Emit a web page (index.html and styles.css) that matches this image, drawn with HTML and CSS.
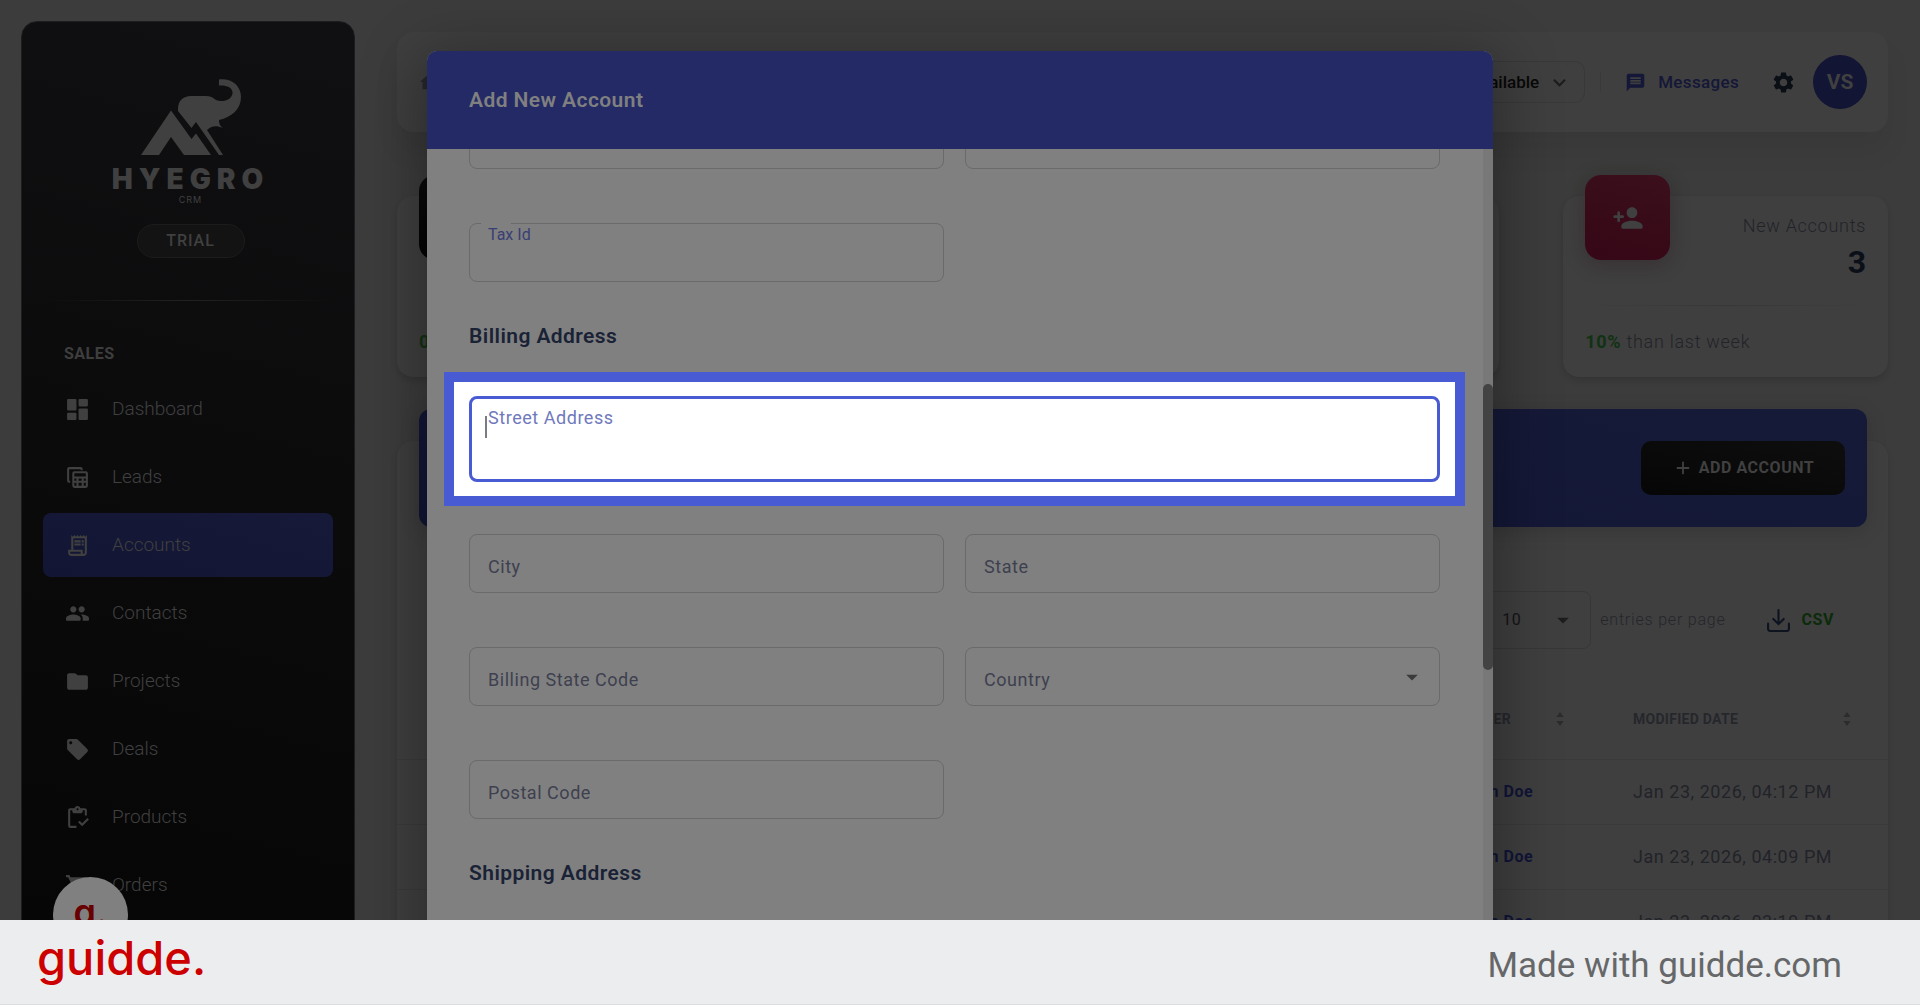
FILE: index.html
```html
<!DOCTYPE html>
<html lang="en">
<head>
    <meta charset="UTF-8">
    <meta name="viewport" content="width=device-width, initial-scale=1.0">
    <title>Hyegro CRM - Accounts</title>
    <link rel="stylesheet" href="styles.css">
</head>
<body>
    <div class="stage">
        <aside class="sidebar">
            <div class="brand">
                <svg class="brand-mark" viewBox="0 0 100 76" aria-hidden="true">
                    <path d="M0 76 30 31.500 50.500 60 55 54.500 70 76H43L30 58 18 76Z"/>
                    <path d="M37 30C37 22 42 17 50 17H65C73 17 73 22 80 22C87 22 92 18 91.500 13C91 8 85 6 78 6.500V.5C91-1 100 7 100 18C100 30 91 38 78 41C78 45 79 47 82 49C75 46 70 47 66 51L82 76H78L55 43 50.500 49 37 32Z"/>
                </svg>
                <span class="brand-name">HYEGRO</span>
                <span class="brand-sub">CRM</span>
                <span class="plan">TRIAL</span>
            </div>
            <hr class="fade-line">
            <h2 class="nav-title">SALES</h2>
            <nav class="nav">
                <a href="#" class="nav-item">
                    <svg viewBox="0 0 24 24"><path d="M4 2h6a1 1 0 0 1 1 1v9a1 1 0 0 1-1 1H3a1 1 0 0 1-1-1V3a1 1 0 0 1 1-1zM14 2h7a1 1 0 0 1 1 1v5a1 1 0 0 1-1 1h-7a1 1 0 0 1-1-1V3a1 1 0 0 1 1-1zM14 11h7a1 1 0 0 1 1 1v9a1 1 0 0 1-1 1h-7a1 1 0 0 1-1-1v-9a1 1 0 0 1 1-1zM3 15h7a1 1 0 0 1 1 1v5a1 1 0 0 1-1 1H3a1 1 0 0 1-1-1v-5a1 1 0 0 1 1-1z"/></svg>
                    Dashboard
                </a>
                <a href="#" class="nav-item">
                    <svg viewBox="0 0 24 24"><path fill-rule="evenodd" d="M5 17H4a2 2 0 0 1-2-2V4a2 2 0 0 1 2-2h11a2 2 0 0 1 2 2v1h-2V4H4v11h1zM9 6h11a2 2 0 0 1 2 2v12a2 2 0 0 1-2 2H9a2 2 0 0 1-2-2V8a2 2 0 0 1 2-2zm0 2v3h11V8zm0 5v2h2v-2zm4 0v2h3v-2zm5 0v2h2v-2zm-9 4v3h2v-3zm4 0v3h3v-3zm5 0v3h2v-3z"/></svg>
                    Leads
                </a>
                <a href="#" class="nav-item active">
                    <svg viewBox="0 0 24 24"><path d="M19.500 3.500 18 2l-1.500 1.500L15 2l-1.500 1.500L12 2l-1.500 1.500L9 2 7.500 3.500 6 2v14H3v3c0 1.660 1.340 3 3 3h12c1.660 0 3-1.340 3-3V2zM15 20H6c-.55 0-1-.45-1-1v-1h10zm4-1c0 .55-.45 1-1 1s-1-.45-1-1v-3H8V5h11zM9 7h6v2H9zm7 0h2v2h-2zm-7 3h6v2H9zm7 0h2v2h-2z"/></svg>
                    Accounts
                </a>
                <a href="#" class="nav-item">
                    <svg viewBox="0 0 24 24"><path d="M16 11c1.660 0 2.990-1.340 2.990-3S17.660 5 16 5s-3 1.340-3 3 1.340 3 3 3m-8 0c1.660 0 2.990-1.340 2.990-3S9.660 5 8 5 5 6.340 5 8s1.340 3 3 3m0 2c-2.330 0-7 1.170-7 3.500V18c0 .55.45 1 1 1h12c.55 0 1-.45 1-1v-1.500C15 14.170 10.330 13 8 13m8 0c-.29 0-.62.02-.97.05 1.160.84 1.970 1.970 1.970 3.450V19h5c.55 0 1-.45 1-1v-1.500c0-2.330-4.670-3.500-7-3.500"/></svg>
                    Contacts
                </a>
                <a href="#" class="nav-item">
                    <svg viewBox="0 0 24 24"><path d="M10.590 4.590C10.210 4.210 9.700 4 9.170 4H4c-1.100 0-1.990.9-1.990 2L2 18c0 1.100.9 2 2 2h16c1.100 0 2-.9 2-2V8c0-1.100-.9-2-2-2h-8z"/></svg>
                    Projects
                </a>
                <a href="#" class="nav-item">
                    <svg viewBox="0 0 24 24"><path d="m21.410 11.580-9-9C12.050 2.220 11.550 2 11 2H4c-1.100 0-2 .9-2 2v7c0 .55.22 1.050.59 1.420l9 9c.36.36.86.58 1.410.58s1.050-.22 1.410-.59l7-7c.37-.36.59-.86.59-1.410s-.23-1.060-.59-1.420M5.500 7C4.670 7 4 6.330 4 5.500S4.670 4 5.500 4 7 4.670 7 5.500 6.330 7 5.500 7"/></svg>
                    Deals
                </a>
                <a href="#" class="nav-item">
                    <svg viewBox="0 0 24 24"><path d="M5 5h2v1c0 1.100.9 2 2 2h6c1.100 0 2-.9 2-2V5h2v5h2V5c0-1.100-.9-2-2-2h-4.180C14.400 1.840 13.300 1 12 1s-2.400.84-2.820 2H5c-1.100 0-2 .9-2 2v15c0 1.100.9 2 2 2h6v-2H5zm7-2c.55 0 1 .45 1 1s-.45 1-1 1-1-.45-1-1 .45-1 1-1m9.500 9.500-5.010 5.010-2.490-2.500-1.500 1.500 3.990 4L23 14z"/></svg>
                    Products
                </a>
                <a href="#" class="nav-item">
                    <svg viewBox="0 0 24 24"><path d="M7 18a2 2 0 1 0 0 4 2 2 0 0 0 0-4M1 2v2h2l3.600 7.590-1.350 2.450C4.520 15.370 5.480 17 7 17h12v-2H7.420l1.130-2h7.450c.75 0 1.410-.41 1.750-1.030l3.580-6.490A1 1 0 0 0 20.460 4H5.210l-.94-2zm16 16a2 2 0 1 0 0 4 2 2 0 0 0 0-4"/></svg>
                    Orders
                </a>
            </nav>
        </aside>

        <main class="main">
            <header class="topbar">
                <a href="#" class="home" aria-label="Home">
                    <svg viewBox="0 0 24 24"><path d="M10 19v-5h4v5c0 .55.45 1 1 1h3c.55 0 1-.45 1-1v-7h1.700c.46 0 .68-.57.33-.87L12.670 3.600a1 1 0 0 0-1.340 0l-8.360 7.530c-.34.3-.13.87.33.87H5v7c0 .55.45 1 1 1h3c.55 0 1-.45 1-1"/></svg>
                </a>
                <button class="availability" type="button">
                    Available
                    <svg viewBox="0 0 24 24"><path d="M7.410 8.590 12 13.170l4.590-4.580L18 10l-6 6-6-6z"/></svg>
                </button>
                <span class="separator"></span>
                <a href="#" class="messages">
                    <svg viewBox="0 0 24 24"><path d="M20 2H4c-1.100 0-1.990.9-1.990 2L2 22l4-4h14c1.100 0 2-.9 2-2V4c0-1.100-.9-2-2-2M6 9h12v2H6zm12 5H6v-2h12zm0-6H6V6h12z"/></svg>
                    Messages
                </a>
                <button class="settings" type="button" aria-label="Settings">
                    <svg viewBox="0 0 24 24"><path d="M19.140 12.940c.04-.3.06-.61.06-.94s-.02-.64-.07-.94l2.030-1.580c.18-.14.23-.41.12-.61l-1.920-3.320c-.12-.22-.37-.29-.59-.22l-2.390.96c-.5-.38-1.030-.7-1.620-.94l-.36-2.540c-.04-.24-.24-.41-.48-.41h-3.840c-.24 0-.43.17-.47.41l-.36 2.540c-.59.24-1.130.57-1.620.94l-2.390-.96c-.22-.08-.47 0-.59.22L2.740 8.870c-.12.21-.08.47.12.61l2.030 1.580c-.05.3-.09.63-.09.94s.02.64.07.94l-2.030 1.580c-.18.14-.23.41-.12.61l1.920 3.320c.12.22.37.29.59.22l2.390-.96c.5.38 1.030.7 1.620.94l.36 2.540c.05.24.24.41.48.41h3.840c.24 0 .44-.17.47-.41l.36-2.540c.59-.24 1.130-.56 1.620-.94l2.390.96c.22.08.47 0 .59-.22l1.920-3.320c.12-.22.07-.47-.12-.61zM12 15.600c-1.980 0-3.600-1.620-3.600-3.600s1.620-3.600 3.600-3.600 3.600 1.620 3.600 3.600-1.620 3.600-3.600 3.600"/></svg>
                </button>
                <span class="avatar">VS</span>
            </header>

            <section class="stats">
                <article class="stat">
                    <div class="stat-icon dark"></div>
                    <hr class="fade-line">
                    <p class="stat-note"><b>0%</b> than last week</p>
                </article>
                <article class="stat"></article>
                <article class="stat"></article>
                <article class="stat">
                    <div class="stat-icon pink">
                        <svg viewBox="0 0 24 24"><path d="M15 12c2.210 0 4-1.790 4-4s-1.790-4-4-4-4 1.790-4 4 1.790 4 4 4m-9-2V8c0-.55-.45-1-1-1s-1 .45-1 1v2H2c-.55 0-1 .45-1 1s.45 1 1 1h2v2c0 .55.45 1 1 1s1-.45 1-1v-2h2c.55 0 1-.45 1-1s-.45-1-1-1zm9 4c-2.670 0-8 1.340-8 4v1c0 .55.45 1 1 1h14c.55 0 1-.45 1-1v-1c0-2.660-5.330-4-8-4"/></svg>
                    </div>
                    <div class="stat-text">
                        <span class="stat-label">New Accounts</span>
                        <strong class="stat-value">3</strong>
                    </div>
                    <hr class="fade-line">
                    <p class="stat-note"><b>10%</b> than last week</p>
                </article>
            </section>

            <section class="panel">
                <div class="panel-head">
                    <button class="add-btn" type="button">
                        <svg viewBox="0 0 24 24"><path d="M18 13h-5v5c0 .55-.45 1-1 1s-1-.45-1-1v-5H6c-.55 0-1-.45-1-1s.45-1 1-1h5V6c0-.55.45-1 1-1s1 .45 1 1v5h5c.55 0 1 .45 1 1s-.45 1-1 1"/></svg>
                        ADD ACCOUNT
                    </button>
                </div>
                <div class="tools">
                    <span class="select-wrap">
                        <select id="pageSize" class="page-size"><option>10</option></select>
                        <svg class="caret" viewBox="0 0 24 24"><path d="m7 10 5 5 5-5z"/></svg>
                    </span>
                    <label for="pageSize" class="entries">entries per page</label>
                    <button class="csv" type="button">
                        <svg viewBox="0 0 24 24"><path d="M12 2v13M7 10.500l5 5 5-5M2 15v5a2 2 0 0 0 2 2h16a2 2 0 0 0 2-2v-5"/></svg>
                        CSV
                    </button>
                </div>
                <table class="accounts">
                    <thead>
                        <tr>
                            <th></th>
                            <th class="owner"><span>OWNER <svg viewBox="0 0 8 14"><path d="M4 0 7.500 5h-7zM4 14 .5 9h7z"/></svg></span></th>
                            <th class="date"><span>MODIFIED DATE <svg viewBox="0 0 8 14"><path d="M4 0 7.500 5h-7zM4 14 .5 9h7z"/></svg></span></th>
                        </tr>
                    </thead>
                    <tbody>
                        <tr><td></td><td class="owner"><a href="#">John Doe</a></td><td class="date">Jan 23, 2026, 04:12 PM</td></tr>
                        <tr><td></td><td class="owner"><a href="#">John Doe</a></td><td class="date">Jan 23, 2026, 04:09 PM</td></tr>
                        <tr><td></td><td class="owner"><a href="#">John Doe</a></td><td class="date">Jan 23, 2026, 03:19 PM</td></tr>
                    </tbody>
                </table>
            </section>
        </main>

        <div class="modal-layer">
            <form class="modal">
                <h1 class="modal-title">Add New Account</h1>
                <div class="modal-body">
                    <div class="fields">
                        <div class="field"><input type="text" id="mobile"><label for="mobile">Mobile Number</label></div>
                        <div class="field"><input type="text" id="pan"><label for="pan">Pan</label></div>
                        <div class="field floated"><input type="text" id="tax"><label for="tax">Tax Id</label></div>
                    </div>
                    <h3>Billing Address</h3>
                    <div class="highlight">
                        <div class="field focused">
                            <textarea id="street"></textarea>
                            <label for="street">Street Address</label>
                            <span class="text-cursor"></span>
                        </div>
                    </div>
                    <div class="fields">
                        <div class="field"><input type="text" id="city"><label for="city">City</label></div>
                        <div class="field"><input type="text" id="state"><label for="state">State</label></div>
                        <div class="field"><input type="text" id="code"><label for="code">Billing State Code</label></div>
                        <div class="field">
                            <select id="country"><option></option></select>
                            <label for="country">Country</label>
                            <svg class="caret" viewBox="0 0 24 24"><path d="m7 10 5 5 5-5z"/></svg>
                        </div>
                        <div class="field"><input type="text" id="postal"><label for="postal">Postal Code</label></div>
                    </div>
                    <h3>Shipping Address</h3>
                    <div class="scrollbar"><div class="thumb"></div></div>
                </div>
            </form>
        </div>

        <button class="bubble" type="button" aria-label="guidde">g.</button>
    </div>

    <footer class="guide-bar">
        <span class="guidde">guidde.</span>
        <span class="made">Made with guidde.com</span>
    </footer>
</body>
</html>
```

FILE: styles.css
```css
* {
    box-sizing: border-box;
}
body {
    margin: 0;
    height: 100vh;
    display: flex;
    flex-direction: column;
    overflow: hidden;
    background: #3b3c3b;
    font-family: Roboto, sans-serif;
    font-size: 18px;
    line-height: 24px;
}
button, input, select, textarea {
    font: inherit;
    letter-spacing: inherit;
    margin: 0;
    background: none;
    border: none;
}
a {
    text-decoration: none;
    color: inherit;
}
svg {
    width: 25px;
    height: 25px;
    fill: currentColor;
    flex: none;
}
.stage {
    flex: 1;
    min-height: 0;
    display: flex;
    gap: 42px;
    padding: 21px 32px 0 21px;
    position: relative;
    overflow: hidden;
}

/* sidebar */
.sidebar {
    width: 334px;
    flex: none;
    height: 1100px;
    padding: 57px 21px 0;
    border: 1px solid #1c1d1e;
    border-radius: 16px;
    background: linear-gradient(195deg, #101012, #040404);
}
.brand {
    display: flex;
    flex-direction: column;
    align-items: center;
    padding-left: 5px;
    color: #404040;
}
.brand-mark {
    width: 100px;
    height: 76px;
}
.brand-name {
    font-family: Inter, sans-serif;
    font-weight: 900;
    font-size: 28px;
    line-height: 28px;
    letter-spacing: 6px;
    margin-top: 10px;
}
.brand-sub {
    font-family: Inter, sans-serif;
    font-size: 9px;
    line-height: 12px;
    letter-spacing: 1px;
    margin-top: 1px;
}
.plan {
    width: 108px;
    padding: 4px 0;
    margin: 18px 0 42px;
    border: 1px solid #1c1c1c;
    border-radius: 17px;
    background: #131313;
    font-size: 16px;
    font-weight: 500;
    letter-spacing: 1px;
    text-align: center;
}
.fade-line {
    height: 1px;
    width: 100%;
    border: none;
    margin: 0;
    background: linear-gradient(90deg, transparent, #222, transparent);
}
.nav-title {
    margin: 41px 21px 11px;
    font-size: 16px;
    font-weight: 700;
    letter-spacing: 0.03em;
    color: #3e3e3e;
}
.nav {
    display: flex;
    flex-direction: column;
    gap: 4px;
}
.nav-item {
    display: flex;
    align-items: center;
    gap: 22px;
    height: 64px;
    padding: 0 22px;
    border-radius: 8px;
    font-size: 19px;
    font-weight: 300;
    color: #404040;
}
.nav-item.active {
    background: linear-gradient(195deg, #161a38, #121533);
}

/* top bar */
.main {
    flex: 1;
    min-width: 0;
    padding-top: 11px;
    letter-spacing: 0.03em;
}
.topbar {
    display: flex;
    align-items: center;
    height: 100px;
    padding: 0 21px;
    border-radius: 16px;
    background: #3f3f3f;
    box-shadow: 0 20px 27px rgba(0, 0, 0, 0.06);
}
.home {
    display: flex;
    margin-right: auto;
    color: #25272b;
}
.home svg {
    width: 22px;
    height: 22px;
}
.availability {
    display: flex;
    align-items: center;
    gap: 8px;
    height: 42px;
    padding: 0 12px 0 20px;
    border: 1px solid #383838;
    border-radius: 10px;
    font-size: 17px;
    font-weight: 500;
    letter-spacing: 0;
    color: #080808;
}
.availability svg {
    fill: #1b1c1e;
}
.separator {
    width: 1px;
    height: 20px;
    margin: 0 24px 0 15px;
    background: #393939;
}
.messages {
    display: flex;
    align-items: center;
    gap: 12px;
    margin-right: 32px;
    font-size: 17px;
    font-weight: 500;
    letter-spacing: 0.02em;
    color: #141737;
}
.messages svg {
    width: 21px;
    height: 21px;
}
.settings {
    display: flex;
    padding: 0;
    margin-right: 17px;
    color: #0a0e15;
}
.avatar {
    width: 54px;
    height: 54px;
    border-radius: 50%;
    background: #121534;
    color: #404040;
    font-size: 21px;
    line-height: 54px;
    font-weight: 700;
    letter-spacing: 0;
    text-align: center;
}

/* stat cards */
.stats {
    display: grid;
    grid-template-columns: repeat(4, 1fr);
    gap: 64px;
    margin-top: 64px;
}
.stat {
    display: grid;
    grid-template-columns: 85px 1fr;
    grid-template-rows: 109px 1px 1fr;
    height: 181px;
    padding: 0 22px;
    border-radius: 16px;
    background: #3f3f3f;
    box-shadow: 0 4px 6px rgba(0, 0, 0, 0.12);
}
.stat-icon {
    display: flex;
    align-items: center;
    justify-content: center;
    height: 85px;
    margin-top: -21px;
    border-radius: 16px;
    color: #404040;
}
.stat-icon svg {
    width: 32px;
    height: 32px;
}
.dark {
    background: linear-gradient(195deg, #0c0c0d, #030303);
}
.pink {
    background: linear-gradient(195deg, #3b0f1c, #360716);
    box-shadow: 0 4px 20px rgba(40, 10, 20, 0.3);
}
.stat-text {
    display: flex;
    flex-direction: column;
    text-align: right;
    padding-top: 18px;
}
.stat-label, .stat-note {
    font-weight: 300;
    letter-spacing: 0.04em;
    color: #222329;
}
.stat-value {
    font-size: 32px;
    line-height: 48px;
    letter-spacing: 0;
    color: #0b0f17;
}
.stat .fade-line {
    grid-column: 1 / -1;
    background: linear-gradient(90deg, transparent, #373737, transparent);
}
.stat-note {
    grid-column: 1 / -1;
    margin: 24px 0 0;
}
.stat-note b {
    font-weight: 700;
    color: #113213;
}

/* accounts panel */
.panel {
    height: 700px;
    margin-top: 64px;
    border-radius: 16px;
    background: #3f3f3f;
    box-shadow: 0 4px 6px rgba(0, 0, 0, 0.12);
    display: flow-root;
}
.panel-head {
    display: flex;
    align-items: center;
    justify-content: flex-end;
    height: 118px;
    margin: -32px 21px 0 22px;
    padding: 0 22px;
    border-radius: 12px;
    background: linear-gradient(195deg, #161a39, #121534);
    box-shadow: 0 4px 20px rgba(0, 0, 0, 0.15);
}
.add-btn {
    display: flex;
    align-items: center;
    justify-content: center;
    gap: 5px;
    width: 204px;
    height: 54px;
    padding: 0;
    border-radius: 10px;
    background: linear-gradient(195deg, #0e0e0f, #060606);
    font-size: 16px;
    font-weight: 700;
    color: #404040;
}
.add-btn svg {
    width: 22px;
    height: 22px;
}
.tools {
    display: flex;
    align-items: center;
    justify-content: flex-end;
    padding: 64px 54px 0 0;
}
.select-wrap {
    display: flex;
    align-items: center;
    position: relative;
}
.caret {
    position: absolute;
    right: 14px;
    width: 28px;
    height: 28px;
    pointer-events: none;
}
.page-size {
    width: 110px;
    height: 58px;
    padding: 0 20px;
    border: 1px solid #373737;
    border-radius: 8px;
    appearance: none;
    font-size: 16px;
    color: #141416;
}
.select-wrap .caret {
    fill: #1d1d1f;
}
.entries {
    margin: 0 40px 0 9px;
    font-size: 16px;
    font-weight: 300;
    letter-spacing: 0.05em;
    color: #25262c;
}
.csv {
    display: flex;
    align-items: center;
    gap: 11px;
    padding: 0;
    font-size: 16px;
    font-weight: 700;
    color: #0b2b0b;
}
.csv svg {
    fill: none;
    stroke: #0d131f;
    stroke-width: 2;
    stroke-linecap: round;
}
.accounts {
    width: 100%;
    margin-top: 30px;
    border-collapse: collapse;
    table-layout: fixed;
}
.accounts th, .accounts td {
    padding: 0;
    text-align: left;
    border-bottom: 1px solid #3a3a3a;
}
.accounts th {
    height: 80px;
    font-size: 14px;
    letter-spacing: 0.02em;
    color: #26272c;
}
.accounts td {
    height: 65px;
    color: #222329;
    font-weight: 400;
}
.accounts th span {
    display: flex;
    align-items: center;
    justify-content: space-between;
}
.accounts th svg {
    width: 8px;
    height: 14px;
    fill: #2b2c2e;
}
.accounts .owner {
    width: 172px;
    padding-right: 69px;
    white-space: nowrap;
}
.accounts .date {
    width: 255px;
    padding-right: 37px;
    white-space: nowrap;
}
.owner a {
    font-size: 16px;
    font-weight: 700;
    color: #111538;
}

/* modal */
.modal-layer {
    position: absolute;
    inset: 51px 0 0;
    display: flex;
    justify-content: center;
    letter-spacing: 0.03em;
}
.modal {
    width: 1066px;
    height: 1000px;
    display: flex;
    flex-direction: column;
    overflow: hidden;
    border-radius: 10px;
    background: #808080;
    box-shadow: 0 11px 60px 9px rgba(0, 0, 0, 0.3);
}
.modal-title {
    position: relative;
    z-index: 1;
    margin: 0;
    padding: 0 42px;
    background: #232a66;
    font-size: 21px;
    line-height: 98px;
    font-weight: 600;
    letter-spacing: 0.02em;
    color: #808080;
}
.modal-body {
    position: relative;
    flex: 1;
    padding: 0 53px 0 42px;
    margin-top: -39px;
}
.fields {
    display: grid;
    grid-template-columns: 1fr 1fr;
    gap: 54px 21px;
}
.modal-body h3 {
    margin: 41px 0 23px;
    font-size: 21px;
    line-height: 26px;
    font-weight: 600;
    letter-spacing: 0.02em;
    color: #1a2236;
}
.field {
    position: relative;
    display: flex;
    align-items: center;
}
.field input, .field select, .field textarea {
    width: 100%;
    height: 59px;
    padding: 0 19px;
    border: 1px solid #6a6a6a;
    border-radius: 8px;
    appearance: none;
    outline: none;
    resize: none;
}
.field label {
    position: absolute;
    left: 19px;
    top: 21px;
    color: #3e404f;
    pointer-events: none;
}
.field .caret {
    fill: #3b3b3b;
}
.field.floated label {
    top: 0;
    font-size: 16px;
    letter-spacing: 0;
    color: #393e73;
}
/* gap in the outline behind the floated label */
.floated label::before {
    content: "";
    position: absolute;
    left: -7px;
    top: 0;
    width: 30px;
    height: 1px;
    background: #808080;
}
.highlight {
    margin: 0 -25px 28px;
    padding: 14px 15px;
    border: 10px solid #485bd3;
    background: #fff;
}
.field.focused textarea {
    height: 86px;
    border: 3px solid #485bd3;
}
.field.focused label {
    top: 10px;
    color: #7079bb;
}
.text-cursor {
    position: absolute;
    left: 16px;
    top: 20px;
    width: 2px;
    height: 22px;
    background: #777c85;
}
.scrollbar {
    position: absolute;
    top: 39px;
    right: 0;
    bottom: 0;
    width: 10px;
    padding-top: 235px;
    background: #787878;
}
.thumb {
    height: 286px;
    border-radius: 5px;
    background: #434343;
}

.bubble {
    position: absolute;
    left: 53px;
    bottom: -32px;
    width: 75px;
    height: 75px;
    padding: 0 0 6px;
    border-radius: 50%;
    background: #808080;
    font-family: Inter, sans-serif;
    font-size: 36px;
    font-weight: 600;
    color: #690000;
}

/* footer */
.guide-bar {
    flex: none;
    display: flex;
    align-items: center;
    justify-content: space-between;
    height: 85px;
    padding: 0 78px 0 37px;
    border-bottom: 1px solid #dcdddf;
    background: #ecedef;
}
.guidde {
    font-family: Inter, sans-serif;
    font-size: 47px;
    line-height: 46px;
    font-weight: 500;
    color: #c00;
    padding-bottom: 8px;
}
.made {
    font-size: 35px;
    line-height: 40px;
    color: #666769;
    padding-top: 8px;
}
```
